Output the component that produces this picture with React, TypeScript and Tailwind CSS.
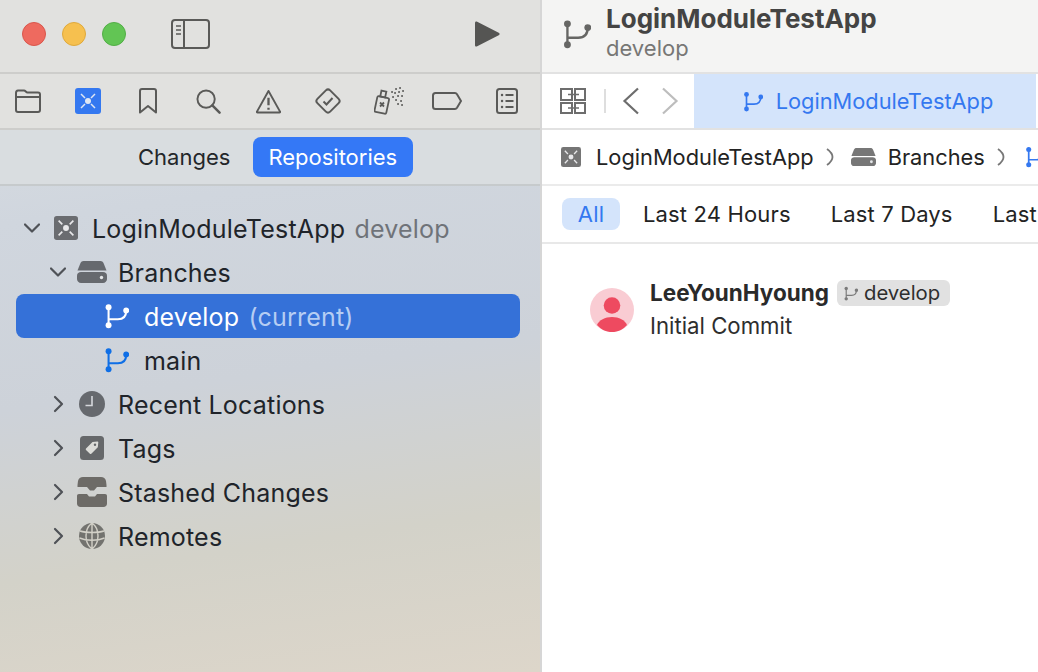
import type { ReactNode } from 'react'

const font = { fontFamily: 'Inter, "Noto Sans", sans-serif' }

function BranchIcon({ className, size = 28 }: { className?: string; size?: number }) {
  return (
    <svg width={size} height={size} viewBox="0 0 28 28" className={className} fill="none">
      <circle cx="6" cy="4.500" r="3.200" fill="currentColor" />
      <circle cx="6" cy="24" r="3.200" fill="currentColor" />
      <circle cx="25" cy="8" r="3.200" fill="currentColor" />
      <path d="M6 4v20M6 17.500h10c5.500 0 9-3 9-9.500" stroke="currentColor" strokeWidth="2.200" />
    </svg>
  )
}

function ProjectIcon({ size, className }: { size: number; className?: string }) {
  return (
    <svg width={size} height={size} viewBox="0 0 26 26" className={className}>
      <rect width="26" height="26" rx="3" fill="currentColor" />
      <circle cx="13" cy="13" r="3.200" fill="#e8e8ea" />
      <path d="M5 5l4 4M21 5l-4 4M5 21l4-4M21 21l-4-4" stroke="#e8e8ea" strokeWidth="1.800" />
    </svg>
  )
}

function DriveIcon({ width = 30, className }: { width?: number; className?: string }) {
  return (
    <svg width={width} height={(width * 22) / 30} viewBox="0 0 30 22" className={className}>
      <path d="M6.500 0h17c1.400 0 2.400.7 3 2l3 7.500H.5L3.500 2c.6-1.300 1.600-2 3-2z" fill="currentColor" />
      <path d="M4 11h22c2.200 0 4 1.500 4 3.500V18c0 2.200-1.800 4-4 4H4c-2.200 0-4-1.800-4-4v-3.500C0 12.500 1.800 11 4 11z" fill="currentColor" />
      <circle cx="24.500" cy="16.500" r="1.700" fill="#e4e6e8" />
    </svg>
  )
}

function Chevron({ open }: { open?: boolean }) {
  return (
    <svg width="16" height="18" viewBox="0 0 16 18" fill="none" className="text-[#4f5257]">
      <path d={open ? 'M1 5.500l7 7 7-7' : 'M5 2l7 7-7 7'} stroke="currentColor" strokeWidth="2.200" strokeLinecap="round" strokeLinejoin="round" />
    </svg>
  )
}

function CrumbArrow({ className }: { className?: string }) {
  return (
    <svg width="8" height="18" viewBox="0 0 8 18" fill="none" stroke="#777" strokeWidth="1.800" className={`shrink-0 ${className}`}>
      <path d="M1 1c3.500 2.500 5.500 5 5.500 8S4.500 14.500 1 17" />
    </svg>
  )
}

function TreeRow({ indent, chevron, icon, children, selected }: { indent: string; chevron?: 'open' | 'closed'; icon: ReactNode; children: ReactNode; selected?: boolean }) {
  return (
    <div className={`h-11 ml-4 mr-[20px] flex items-center text-[25px] tracking-[0.2px] rounded-lg ${indent} ${selected ? 'bg-[#3571d8] text-white' : 'text-[#20242a]'}`}>
      <div className="w-4 shrink-0 flex justify-center">
        {chevron && <Chevron open={chevron === 'open'} />}
      </div>
      <div className="w-[52px] shrink-0 flex justify-center">{icon}</div>
      <div className="whitespace-nowrap leading-none mt-[3px]">{children}</div>
    </div>
  )
}

function NavIcons() {
  return (
    <div className="h-[56px] flex items-center pl-[15px] text-[#5a5a58] border-b-2 border-[#cdcdcb]">
      <svg width="26" height="24" viewBox="0 0 26 24" fill="none" stroke="currentColor" strokeWidth="2">
        <path d="M1 21V4c0-1.500.8-2.500 2-2.500h6c1.500 0 2 2 3.500 2H23c1.400 0 2 1 2 2V21c0 1-.8 2-2 2H3c-1.200 0-2-1-2-2zM1 8h24" />
      </svg>
      <svg width="26" height="26" viewBox="0 0 26 26" className="text-[#3478f0] ml-[34px]">
        <rect width="26" height="26" rx="3" fill="currentColor" />
        <circle cx="13" cy="13" r="3" fill="#dfe6f2" />
        <path d="M6 6l4 4M20 6l-4 4M6 20l4-4M20 20l-4-4" stroke="#dfe6f2" strokeWidth="1.500" />
      </svg>
      <svg width="18" height="26" viewBox="0 0 18 26" fill="none" stroke="currentColor" strokeWidth="2" className="ml-[38px]">
        <path d="M1 24.500V3c0-1.200.8-2 2-2h12c1.200 0 2 .8 2 2v21.500L9 18z" strokeLinejoin="round" />
      </svg>
      <svg width="25" height="25" viewBox="0 0 26 26" fill="none" stroke="currentColor" className="ml-[39px]">
        <circle cx="10.500" cy="10.500" r="9" strokeWidth="2" />
        <path d="M17 17l7.500 7.500" strokeWidth="2.600" strokeLinecap="round" />
      </svg>
      <svg width="25" height="25" viewBox="0 0 26 26" fill="none" stroke="currentColor" strokeWidth="2" className="ml-[35px]">
        <path d="M13 2L25 23.500c.3.500 0 1-.6 1H1.600c-.6 0-.9-.5-.6-1z" strokeLinejoin="round" />
        <path d="M13 9v8M13 19.500v2" strokeWidth="2.400" />
      </svg>
      <svg width="28" height="28" viewBox="0 0 28 28" fill="none" stroke="currentColor" strokeWidth="2" className="ml-[33px]">
        <rect x="5" y="5" width="18" height="18" rx="3" transform="rotate(45 14 14)" />
        <path d="M9.500 14.500l3 3 6-6.500" />
      </svg>
      <svg width="31" height="28" viewBox="0 0 31 28" fill="none" stroke="currentColor" strokeWidth="1.800" className="ml-[32px]">
        <rect x="2" y="10" width="12" height="16" rx="1.500" transform="rotate(12 8 17)" />
        <rect x="7" y="4" width="5" height="6" transform="rotate(12 9 6)" />
        <path d="M6 15.500l4 4M10 15.500l-4 4" />
        <path d="M18 5h.1M22 2h.1M26 1h.1M21 6h.1M25 5h.1M29 4h.1M24 9h.1M28 9h.1M22 13h.1M27 14h.1M19 10h.1M24 17h.1M28 18h.1" strokeWidth="1.900" strokeLinecap="round" />
      </svg>
      <svg width="30" height="18" viewBox="0 0 30 18" fill="none" stroke="currentColor" strokeWidth="2" className="ml-[27px]">
        <path d="M3.500 1H23c1 0 1.500.4 2 1.200L29 9l-4 6.800c-.5.800-1 1.200-2 1.200H3.500C2 17 1 16 1 14.500v-11C1 2 2 1 3.500 1z" />
      </svg>
      <svg width="22" height="26" viewBox="0 0 22 26" fill="none" stroke="currentColor" strokeWidth="2" className="ml-[34px]">
        <rect x="1" y="1" width="20" height="24" rx="2.500" />
        <path d="M6 7h.1M6 13h.1M6 19h.1" strokeWidth="2.400" strokeLinecap="round" />
        <path d="M9.500 7h8M9.500 13h8M9.500 19h8" />
      </svg>
    </div>
  )
}

function Sidebar() {
  return (
    <aside className="w-[540px] shrink-0 h-full flex flex-col bg-[linear-gradient(172deg,#dde1e3_0%,#d0d6de_30%,#cdd2d9_55%,#d3d2c9_78%,#ddd6ca_100%)]">
      <div className="bg-[#e1e1df]">
        <div className="h-[72px] flex items-center pb-[4px] pl-[22px] pr-[39px]">
          <span className="w-6 h-6 rounded-full bg-[#ee6a5f] border border-[#d9564c]" />
          <span className="w-6 h-6 rounded-full bg-[#f6c04f] border border-[#dfa93c] ml-4" />
          <span className="w-6 h-6 rounded-full bg-[#62c554] border border-[#52ae46] ml-4" />
          <svg width="39" height="30" viewBox="0 0 39 30" fill="none" stroke="#5a5a58" strokeWidth="2" className="ml-[45px]">
            <rect x="1" y="1" width="37" height="28" rx="3" />
            <path d="M13 1v28" />
            <path d="M5 7h5M5 11h5M5 15h5" strokeWidth="1.500" />
          </svg>
          <svg width="28" height="28" viewBox="0 0 28 28" className="ml-auto text-[#555553]">
            <path d="M2 3c0-1.500 1-2 2.200-1.300l21.500 11c1.200.7 1.200 1.900 0 2.600l-21.500 11C3 27 2 26.500 2 25z" fill="currentColor" />
          </svg>
        </div>
        <div className="h-0.5 bg-[#cdcdcb]" />
        <NavIcons />
      </div>
      <div className="h-[56px] flex items-center pl-[123px] border-b-2 border-[#c6cacc] text-[22px] font-normal bg-[#d9dde0]">
        <div className="h-10 px-[15px] flex items-center text-[#23262a]">Changes</div>
        <div className="h-10 pl-[15px] pr-[16px] flex items-center rounded-lg bg-[#3478f6] text-white ml-[8px]">Repositories</div>
      </div>
      <div className="pt-[20px]">
        <TreeRow indent="pl-2" chevron="open" icon={<ProjectIcon size={24} className="text-[#6a6c70]" />}>
          <span>LoginModuleTestApp</span> <span className="text-[#6f7379] ml-[2px]">develop</span>
        </TreeRow>
        <TreeRow indent="pl-[34px]" chevron="open" icon={<DriveIcon className="text-[#66696e]" />}>
          Branches
        </TreeRow>
        <TreeRow indent="pl-[60px]" selected icon={<BranchIcon size={26} className="text-white mr-[4px]" />}>
          develop <span className="text-[#b5cdf3] ml-[2px]">(current)</span>
        </TreeRow>
        <TreeRow indent="pl-[60px]" icon={<BranchIcon size={26} className="text-[#0f6fe6] mr-[4px]" />}>
          main
        </TreeRow>
        <TreeRow indent="pl-[34px]" chevron="closed" icon={
          <svg width="26" height="26" viewBox="0 0 26 26" className="text-[#66696e]">
            <circle cx="13" cy="13" r="13" fill="currentColor" />
            <path d="M13 5v9.500H6.500" fill="none" stroke="#d5d8dc" strokeWidth="1.600" />
          </svg>
        }>
          Recent Locations
        </TreeRow>
        <TreeRow indent="pl-[34px]" chevron="closed" icon={
          <svg width="24" height="24" viewBox="0 0 24 24" className="text-[#66686a]">
            <rect width="24" height="24" rx="3.500" fill="currentColor" />
            <path d="M6 12.500l6.500-6.500 5-.5c.5 0 .8.300.8.800l-.5 5-6.500 6.500c-.4.400-1 .4-1.400 0L6 14c-.4-.4-.4-1 0-1.500z" fill="#dcdcd8" />
            <circle cx="15" cy="8.800" r="1.200" fill="#66686a" />
          </svg>
        }>
          Tags
        </TreeRow>
        <TreeRow indent="pl-[34px]" chevron="closed" icon={
          <svg width="30" height="30" viewBox="0 0 30 30" className="text-[#6d6b67]">
            <path d="M6 0h18c2.500 0 4.500 1.500 5 4l.5 4v2H20l-3 3.500h-4L10 10H.5V8L1 4c.5-2.500 2.500-4 5-4z" fill="currentColor" />
            <path d="M2 17h8l2 2.500h6L20 17h8c1.300 0 2 .8 2 2v7.500c0 2-1.500 3.500-3.500 3.500h-23C1.500 30 0 28.500 0 26.500V19c0-1.200.7-2 2-2z" fill="currentColor" />
          </svg>
        }>
          Stashed Changes
        </TreeRow>
        <TreeRow indent="pl-[34px]" chevron="closed" icon={
          <svg width="26" height="26" viewBox="0 0 26 26" className="text-[#73736f]">
            <circle cx="13" cy="13" r="13" fill="currentColor" />
            <path d="M13 0c-4 3-6 8-6 13s2 10 6 13M13 0c4 3 6 8 6 13s-2 10-6 13M13 0v26M1 8c6 2 18 2 24 0M0.500 15c7 3 18 3 25 0" fill="none" stroke="#d3d1c8" strokeWidth="1.400" />
          </svg>
        }>
          Remotes
        </TreeRow>
      </div>
    </aside>
  )
}

function Main() {
  return (
    <main className="flex-1 min-w-0 h-full flex flex-col bg-white border-l-2 border-[#d6d6d6] overflow-hidden">
      <div className="h-[72px] shrink-0 flex items-start bg-[#f4f4f3]">
        <BranchIcon size={30} className="text-[#666664] ml-[19px] mt-[19px] shrink-0" />
        <div className="ml-[15px] pt-[4px]">
          <div className="text-[26px] leading-[30px] font-bold text-[#444443]">LoginModuleTestApp</div>
          <div className="text-[22px] leading-[26px] mt-[1px] text-[#777775]">develop</div>
        </div>
      </div>
      <div className="h-0.5 shrink-0 bg-[#e2e2e2]" />
      <div className="h-[54px] shrink-0 flex items-center text-[#6d6d6d]">
        <svg width="26" height="26" viewBox="0 0 26 26" fill="none" stroke="currentColor" strokeWidth="2" className="ml-[18px] shrink-0">
          <rect x="1" y="1" width="11" height="11" />
          <rect x="15" y="1" width="10" height="11" />
          <rect x="1" y="15" width="11" height="10" />
          <rect x="15" y="15" width="10" height="10" />
          <path d="M8 6.500h11M8 20h11" strokeWidth="1.500" />
        </svg>
        <div className="w-0.5 h-6 bg-[#dedede] ml-[18px]" />
        <svg width="18" height="28" viewBox="0 0 18 28" fill="none" stroke="#6d6d6d" strokeWidth="2.200" className="ml-[16px] shrink-0">
          <path d="M16 1.500L2.500 14 16 26.500" />
        </svg>
        <svg width="18" height="28" viewBox="0 0 18 28" fill="none" stroke="#bdbdbd" strokeWidth="2.200" className="ml-[21px] shrink-0">
          <path d="M2 1.500L15.500 14 2 26.500" />
        </svg>
        <div className="h-full flex-1 ml-[15px] mr-[2px] pl-[5px] bg-[#d4e4fb] flex items-center justify-center text-[#3478f0] text-[21.800px]">
          <BranchIcon size={21} className="mr-[13px]" />
          <span>LoginModuleTestApp</span>
        </div>
      </div>
      <div className="h-0.5 shrink-0 bg-[#e2e2e2]" />
      <div className="h-[54px] shrink-0 flex items-center pl-[19px] text-[21.800px] text-[#232323] whitespace-nowrap">
        <ProjectIcon size={20} className="text-[#757575] shrink-0" />
        <span className="ml-[15px]">LoginModuleTestApp</span>
        <CrumbArrow className="ml-[12px]" />
        <DriveIcon width={25} className="text-[#777777] ml-[17px] shrink-0" />
        <span className="ml-[12px]">Branches</span>
        <CrumbArrow className="ml-[12px]" />
        <BranchIcon size={22} className="text-[#3478f0] ml-[19px] shrink-0" />
      </div>
      <div className="h-0.5 shrink-0 bg-[#ebebeb]" />
      <div className="h-[58px] shrink-0 flex items-center pl-[20px] text-[22px] tracking-[0.15px] text-[#232323] whitespace-nowrap border-b-2 border-[#e8e8e8]">
        <div className="h-8 w-[58px] shrink-0 rounded-lg bg-[#d4e4fb] text-[#3478f0] flex items-center justify-center">All</div>
        <span className="ml-[23px] shrink-0">Last 24 Hours</span>
        <span className="ml-[40px] shrink-0">Last 7 Days</span>
        <span className="ml-[40px] shrink-0">Last</span>
      </div>
      <div className="flex items-start pl-[48px] pt-[34px]">
        <svg width="44" height="44" viewBox="0 0 44 44" className="mt-[10px] shrink-0">
          <circle cx="22" cy="22" r="22" fill="#f9ccd3" />
          <circle cx="22" cy="17.500" r="8.300" fill="#ee4a60" />
          <path d="M7 37c2-5 8-8 15-8s13 3 15 8c-4 4.500-9 7-15 7s-11-2.500-15-7z" fill="#ee4a60" />
        </svg>
        <div className="ml-[16px]">
          <div className="flex items-center h-[30px]">
            <span className="text-[22.500px] font-bold text-[#2a2a2a] whitespace-nowrap">LeeYounHyoung</span>
            <span className="ml-[8px] h-[26px] pl-[6px] pr-[10px] flex items-center rounded-md bg-[#e1e1e1] text-[20.300px] text-[#2e2e2e]">
              <BranchIcon size={15} className="text-[#7b7b7b] mr-[6px]" />
              develop
            </span>
          </div>
          <div className="text-[22.200px] leading-[28px] mt-[4px] text-[#2e2e2e]">Initial Commit</div>
        </div>
      </div>
    </main>
  )
}

export default function App() {
  return (
    <div style={font} className="w-[1038px] h-[672px] flex overflow-hidden">
      <Sidebar />
      <Main />
    </div>
  )
}
